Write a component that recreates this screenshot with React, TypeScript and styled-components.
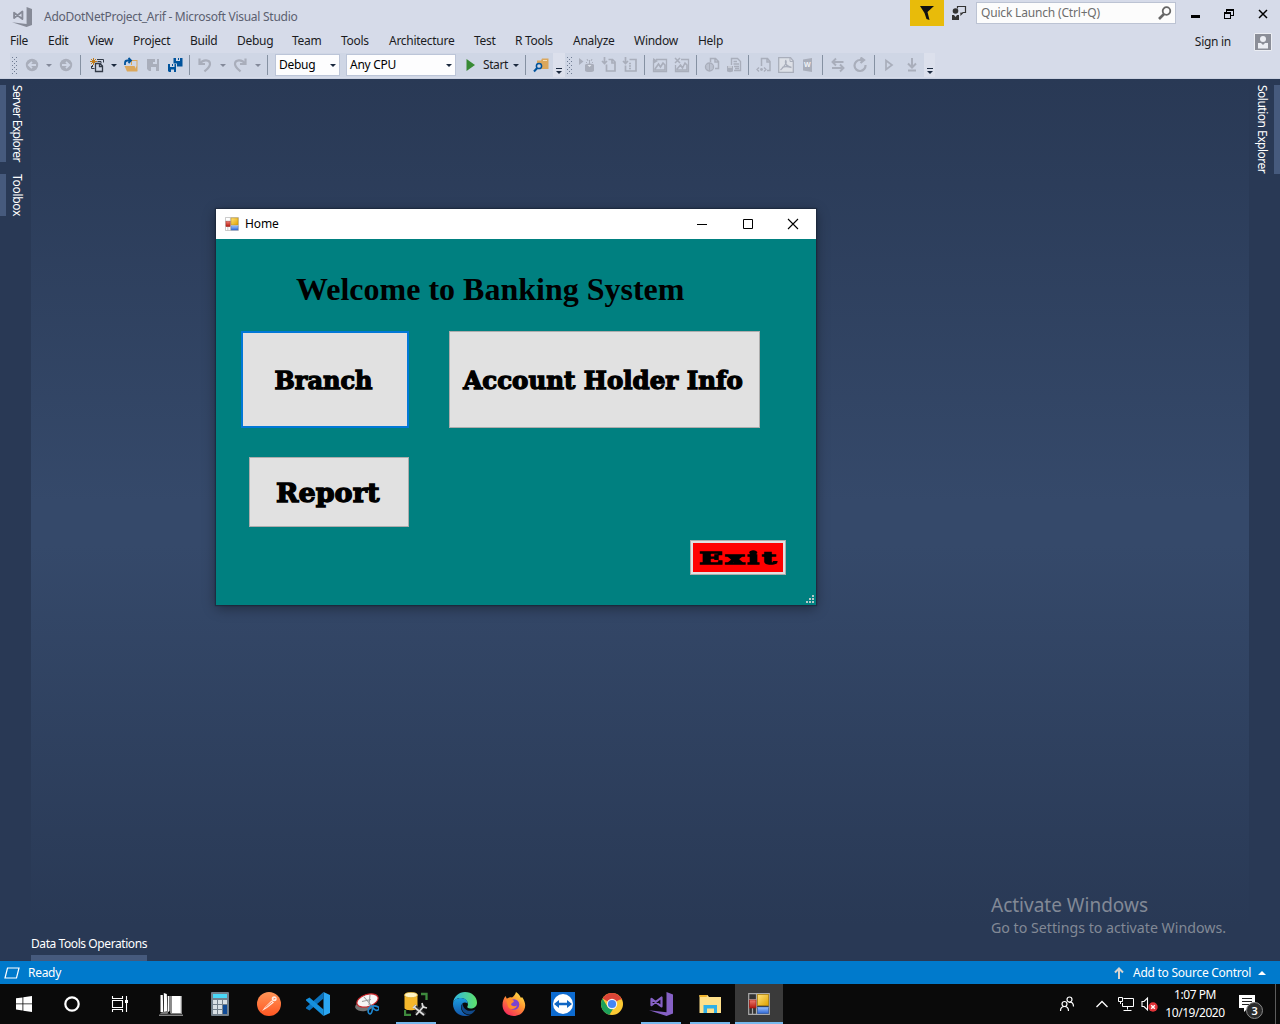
import React from 'react';
import styled, { createGlobalStyle, css } from 'styled-components';

const GlobalStyle = createGlobalStyle`
  * { box-sizing: border-box; }
  html, body { margin: 0; padding: 0; }
  body {
    width: 1280px;
    height: 1024px;
    overflow: hidden;
    font-family: "Noto Sans", "Open Sans", sans-serif;
    font-size: 12px;
    letter-spacing: -0.28px;
    line-height: 16px;
    color: #1b1b1f;
  }
  svg { display: block; flex: none; }
`;

const Desktop = styled.div`
  width: 1280px;
  height: 1024px;
  display: flex;
  flex-direction: column;
  position: relative;
  background: #293955;
`;

const Header = styled.header`
  height: 79px;
  flex: none;
  background: #d6dbe9;
  border-bottom: 1px solid #c9d0e0;
`;

const TitleRow = styled.div`
  height: 30px;
  display: flex;
  align-items: flex-start;
  padding-left: 12px;
`;

const LogoBox = styled.div`
  padding-top: 7px;
  width: 32px;
`;

const AppTitle = styled.div`
  padding-top: 9px;
  width: 866px;
  color: #5b6070;
  white-space: nowrap;
  letter-spacing: -0.27px;
`;

const Flag = styled.div`
  width: 34px;
  height: 26px;
  background: #e8bb0a;
  display: flex;
  align-items: center;
  justify-content: center;
`;

const FeedbackBox = styled.div`
  width: 32px;
  padding: 5px 0 0 7px;
`;

const Search = styled.div`
  width: 200px;
  height: 22px;
  margin-top: 2px;
  border: 1px solid #bcc3d3;
  background: #fcfcfc;
  color: #6d6d6d;
  display: flex;
  align-items: center;
  justify-content: space-between;
  padding: 0 3px 0 4px;
  white-space: nowrap;
  letter-spacing: -0.18px;
`;

const WindowControls = styled.div`
  flex: 1;
  display: flex;
  padding: 8px 11px 0 14px;
  justify-content: space-between;
`;

const MenuRow = styled.nav`
  height: 23px;
  display: flex;
  align-items: center;
  padding: 0 0 2px 10px;
`;

const MenuItem = styled.div<{ $w: number }>`
  width: ${p => p.$w}px;
  white-space: nowrap;
`;

const SignIn = styled.div`
  margin-left: auto;
  padding: 2px 8px 0 0;
  display: flex;
  align-items: center;
  gap: 23px;
  white-space: nowrap;
`;

const ToolRow = styled.div`
  display: flex;
  height: 24px;
  padding-left: 10px;
`;

const Toolbar = styled.div`
  height: 24px;
  display: flex;
  align-items: center;
  background: #cfd6e5;
`;

const Slot = styled.div<{ $ml?: number }>`
  margin-left: ${p => p.$ml ?? 6}px;
  flex: none;
`;

const Sep = styled.div<{ $ml?: number }>`
  margin-left: ${p => p.$ml ?? 6}px;
  width: 1px;
  height: 20px;
  background: #8591a2;
`;

const Grip = styled.div`
  width: 8px;
  height: 17px;
  background-image: radial-gradient(circle at 0.5px 0.5px, #6f7c93 0.5px, transparent 0.7px),
    radial-gradient(circle at 2.5px 2.5px, #6f7c93 0.5px, transparent 0.7px);
  background-size: 4px 4px;
  background-position: 2px 0;
  background-clip: content-box;
  padding: 0 1px 0 2px;
`;

const Caret = styled.div<{ $ml?: number; $dim?: boolean; $up?: boolean }>`
  margin-left: ${p => p.$ml ?? 0}px;
  width: 7px;
  flex: none;
  display: flex;
  justify-content: center;
  &::before {
    content: "";
    border: 3px solid transparent;
    ${p => (p.$up
      ? css`border-top-width: 0; border-bottom: 4px solid #fff; border-left-width: 4px; border-right-width: 4px;`
      : css`border-bottom-width: 0; border-top: 3px solid ${p.$dim ? '#83899a' : '#1b293e'};`)}
  }
`;

const Combo = styled.div<{ $w: number; $ml: number }>`
  margin-left: ${p => p.$ml}px;
  width: ${p => p.$w}px;
  height: 22px;
  border: 1px solid #bcc5d8;
  background: #fdfdfe;
  color: #000;
  display: flex;
  align-items: center;
  justify-content: space-between;
  padding: 0 3px;
  white-space: nowrap;
`;

const StartLabel = styled.div`
  width: 26px;
  margin-left: 5px;
  white-space: nowrap;
  letter-spacing: -0.4px;
`;

const Overflow = styled.div<{ $w: number }>`
  width: ${p => p.$w}px;
  height: 24px;
  background: #dce0ec;
  display: flex;
  flex-direction: column;
  align-items: center;
  justify-content: flex-end;
  gap: 2px;
  padding-bottom: 3px;
  &::before { content: ""; width: 6px; height: 1px; background: #1b293e; }
  &::after { content: ""; border: 3px solid transparent; border-bottom: 0; border-top-color: #1b293e; }
`;

const Workspace = styled.main`
  height: 846px;
  display: flex;
`;

const Rail = styled.aside<{ $right?: boolean }>`
  width: 31px;
  padding-top: 6px;
  display: flex;
  flex-direction: column;
  gap: 12px;
  align-items: ${p => (p.$right ? 'flex-end' : 'flex-start')};
`;

const RailTab = styled.div<{ $h: number; $right?: boolean; $track: number }>`
  height: ${p => p.$h}px;
  width: 28px;
  writing-mode: vertical-rl;
  line-height: 22px;
  color: #fff;
  letter-spacing: ${p => p.$track}px;
  white-space: nowrap;
  ${p => (p.$right
    ? css`border-right: 6px solid #465a7d; padding-right: 1px;`
    : css`border-left: 6px solid #465a7d;`)}
`;

const Canvas = styled.section`
  flex: 1;
  background: linear-gradient(#293955 0%, #35496a 50%, #35496a 55%, #293955 100%);
`;

const BottomDock = styled.div`
  height: 36px;
  padding-left: 31px;
  display: flex;
`;

const DockTab = styled.div`
  width: 116px;
  padding-top: 11px;
  color: #fff;
  white-space: nowrap;
  border-bottom: 6px solid #465a7d;
  letter-spacing: -0.42px;
`;

const StatusBar = styled.footer`
  height: 23px;
  flex: none;
  background: #007acc;
  color: #fff;
  display: flex;
  align-items: center;
  padding: 1px 15px 0 4px;
  white-space: nowrap;
`;

const StatusText = styled.div`
  margin-left: 8px;
`;

const SourceControl = styled.div`
  margin-left: auto;
  display: flex;
  align-items: center;
  gap: 9px;
`;

const SourceLabel = styled.span`
  width: 120px;
  letter-spacing: -0.26px;
`;

const Dialog = styled.div`
  position: absolute;
  left: 216px;
  top: 209px;
  width: 600px;
  height: 396px;
  background: #008080;
  box-shadow: 0 0 1px 1px rgba(20, 30, 45, 0.5), 0 3px 12px rgba(0, 0, 0, 0.4);
  display: flex;
  flex-direction: column;
`;

const DialogTitle = styled.div`
  height: 30px;
  background: #fff;
  color: #000;
  display: flex;
  align-items: center;
  padding: 0 17px 1px 9px;
  gap: 6px;
  letter-spacing: -0.1px;
`;

const DialogControls = styled.div`
  margin-left: auto;
  display: flex;
  gap: 33.500px;
`;

const Welcome = styled.h1`
  margin: 32px 0 24px 80px;
  height: 36px;
  font: bold 32px/36px "Liberation Serif", "Times New Roman", serif;
  letter-spacing: 0;
  color: #000;
  white-space: nowrap;
`;

const ButtonRow = styled.div<{ $left: number; $bottom: number }>`
  display: flex;
  gap: 40px;
  padding-left: ${p => p.$left}px;
  margin-bottom: ${p => p.$bottom}px;
`;

const FormButton = styled.button<{ $w: number; $h: number; $focus?: boolean; $size: number }>`
  width: ${p => p.$w}px;
  height: ${p => p.$h}px;
  padding: 2px 3px 0 0;
  border: ${p => (p.$focus ? '2px solid #0078d7' : '1px solid #adadad')};
  background: #e1e1e1;
  color: #000;
  font: 900 ${p => p.$size}px/1 "DejaVu Serif", "Cooper Black", serif;
  letter-spacing: 0;
  white-space: nowrap;
  display: flex;
  align-items: center;
  justify-content: center;
`;

const Face = styled.span<{ $sx: number; $track?: number }>`
  transform: scaleX(${p => p.$sx});
  letter-spacing: ${p => p.$track ?? 0}px;
  margin-right: ${p => -(p.$track ?? 0)}px;
  -webkit-text-stroke: 1.3px #000;
`;

const ExitButton = styled.button`
  align-self: flex-end;
  margin-right: 30px;
  width: 96px;
  height: 35px;
  padding: 1px 0 0;
  border: 1px solid #adadad;
  box-shadow: inset 0 0 0 2px #e1e1e1;
  background: #f00;
  color: #000;
  font: 900 17px/1 "DejaVu Serif", serif;
  display: flex;
  align-items: center;
  justify-content: center;
`;

const SizeGrip = styled.div`
  margin: auto 1px 1px auto;
`;

const Watermark = styled.div`
  position: absolute;
  left: 991px;
  top: 892px;
  color: #828996;
  white-space: nowrap;
  letter-spacing: 0;
`;

const WatermarkTitle = styled.div`
  font-size: 19px;
  line-height: 26px;
`;

const WatermarkText = styled.div`
  font-size: 14.2px;
  line-height: 20px;
`;

const Taskbar = styled.div`
  height: 40px;
  flex: none;
  background: #0a0a0a;
  display: flex;
  color: #fff;
`;

const SystemButton = styled.div`
  width: 48px;
  display: flex;
  align-items: center;
  justify-content: center;
`;

const Apps = styled.div`
  display: flex;
  gap: 1px;
  padding-left: 3px;
`;

const AppButton = styled.div<{ $state?: 'open' | 'active' }>`
  width: 48px;
  height: 40px;
  display: flex;
  align-items: center;
  justify-content: center;
  background: ${p => (p.$state === 'active' ? '#3a3a3a' : 'transparent')};
  ${p => p.$state && css`
    background-image: linear-gradient(#76b9ed, #76b9ed);
    background-repeat: no-repeat;
    background-size: ${p.$state === 'active' ? 48 : 40}px 2px;
    background-position: center bottom;
  `}
`;

const Tray = styled.div`
  margin-left: auto;
  display: flex;
  align-items: center;
`;

const TrayIcon = styled.div<{ $w: number }>`
  width: ${p => p.$w}px;
`;

const Clock = styled.div`
  width: 66px;
  text-align: center;
  line-height: 18px;
  padding-bottom: 1px;
  white-space: nowrap;
  letter-spacing: -0.45px;
`;

const Notifications = styled.div`
  position: relative;
  width: 26px;
  height: 18px;
  margin-left: 11px;
`;

const NoticeCount = styled.div`
  position: absolute;
  left: 7px;
  top: 7px;
  width: 17px;
  height: 17px;
  border-radius: 50%;
  border: 1px solid #8a8a8a;
  background: #2b2b2b;
  text-align: center;
  font-size: 11px;
  line-height: 15px;
  font-weight: 600;
`;

const ShowDesktop = styled.div`
  width: 5px;
  height: 40px;
  border-left: 1px solid #5c5c5c;
  margin-left: 10px;
`;

const G = '#a9aebb';

const Tool = ({ children }: { children: React.ReactNode }) => (
  <svg width="16" height="16" viewBox="0 0 16 16" fill="none">{children}</svg>
);

const SaveIcon = () => (
  <Tool>
    <path fill={G} fillRule="evenodd" d="M2 2h12v12H4l-2-2zM5 2v5h7V2h-2v3H8V2zM6 10v4h5v-4z" />
    <path fill={G} d="M2 7h12v3H2zM5 2h3v5H5z" />
  </Tool>
);

const BackIcon = ({ flip }: { flip?: boolean }) => (
  <Tool>
    <g transform={flip ? 'matrix(-1 0 0 1 16 0)' : undefined}>
      <circle cx="8" cy="8" r="6.200" fill={G} />
      <path d="M12 8H5M8 4.8 4.8 8 8 11.2" stroke="#cfd6e5" strokeWidth="1.800" />
    </g>
  </Tool>
);

const NewProjectIcon = () => (
  <Tool>
    <path d="M4.500 1v7M1 4.500h7M2 2l5 5M7 2 2 7" stroke="#c27d1a" strokeWidth="1" />
    <path d="M8 2.500h6.500v3M2.500 9v2.500h3" stroke="#333b48" />
    <path d="M6.500 6.500h4.500l2.500 2.500v5.500h-7zM10.500 6.500v3h3" stroke="#333b48" strokeWidth="1.300" />
    <path d="M3.500 8v2M8.500 4.500H12v2" stroke="#333b48" />
  </Tool>
);

const OpenIcon = () => (
  <Tool>
    <path d="M8 3h6.500v11H13V8H8z" fill="#dba75c" />
    <path d="M1.500 9H11.500l3 5.500H4z" fill="#dba75c" />
    <path d="M9 4h4.500v6l-1-2H9z" fill="#cfd6e5" />
    <path d="M2 8V6a2.500 2.500 0 0 1 2.500-2.500H7.500M5.500 1 8 3.500 5.500 6" stroke="#00539c" strokeWidth="1.800" />
  </Tool>
);

const SaveAllIcon = () => (
  <Tool>
    <path fill="#00539c" fillRule="evenodd" d="M6.500 1h9v8.500H10V6.500H6.500zM9 1v3h4V1h-1v2h-1V1z" />
    <path fill="#00539c" fillRule="evenodd" d="M1 7h8v8H2l-1-1zM3 7v3h4.500V7H6v2H5V7zM4 12.500V15h3v-2.500z" />
  </Tool>
);

const UndoIcon = ({ flip }: { flip?: boolean }) => (
  <Tool>
    <g transform={flip ? 'matrix(-1 0 0 1 16 0)' : undefined} stroke={G} strokeWidth="2.200">
      <path d="M3 6.500C6 2 13 2.500 13 7c0 3-3 5-5.500 7.500" />
      <path d="M2.500 1.500v5.500H8" />
    </g>
  </Tool>
);

const FindFolderIcon = () => (
  <Tool>
    <path d="M4 3.500h4L9 1.500h6.500V12H4z" fill="#dba75c" />
    <path d="M10 3.500h4" stroke="#f4dfb8" />
    <circle cx="6" cy="9" r="2.600" fill="#cfd6e5" stroke="#00539c" strokeWidth="1.500" />
    <path d="M4.200 11 1 14.500" stroke="#00539c" strokeWidth="2" />
  </Tool>
);

const dimIcons: Record<string, React.ReactNode> = {
  dbRun: (<><path d="M0 1l4.500 3.500L0 8zM6 8h9v5.500c0 2-9 2-9 0z" fill={G} /><ellipse cx="10.500" cy="8" rx="4.500" ry="1.600" fill={G} /><path d="M10.500 3v6M8 2l1 2M13 2l-1 2M7 5l1 1M14 5l-1 1" stroke={G} /><path d="M8.500 8h4l-2 2z" fill="#e2e6ee" /></>),
  pageIn: (<><path d="M5.500 7.500V14h8.500V5L11.500 2.500H7.500M11 2.500V6h3.500" stroke={G} strokeWidth="1.700" /><path d="M3.500 0v6M1 4l2.500 2.500L6 4" stroke={G} strokeWidth="1.700" /></>),
  tableIn: (<><path d="M3.500 8.500V14h10.500V2.500H7.500M7 6.500h2M7 9h2M7 11.500h2" stroke={G} strokeWidth="1.700" /><path d="M3.500 0v6M1 4l2.500 2.500L6 4" stroke={G} strokeWidth="1.700" /></>),
  chart: (<><path d="M1.500 3v11.500h13V2.500H4" stroke={G} strokeWidth="1.300" /><path d="M1 1l5 3-5 3z" fill={G} /><path d="m3 12 3.500-5 2 3 2.500-4 2 2v5H3z" stroke={G} strokeWidth="1.600" /></>),
  chartX: (<><path d="M1.500 8v6.500h13V2.500H7" stroke={G} strokeWidth="1.300" /><path d="m1 1 5 5M6 1 1 6" stroke={G} strokeWidth="1.500" /><path d="m3 12 3.500-4 2 3L11 6l2 2v5H3z" stroke={G} strokeWidth="1.600" /></>),
  web: (<><path d="M6.500 5V1.500h5l3 3v7H11M11 1.500V5h3.500" stroke={G} strokeWidth="1.500" /><circle cx="5.500" cy="10" r="4" stroke={G} strokeWidth="1.400" /><path d="M1.500 10h8M5.500 6v8M2.500 8h6M2.500 12h6" stroke={G} /></>),
  dbDoc: (<><path d="M5.500 8V1.500h6l3 3v9H8M7.500 4.500H11M7.500 7H13M8 9.500h5M9 11.500h4" stroke={G} strokeWidth="1.400" /><path d="M1 9h6v5c0 1.500-6 1.500-6 0z" fill={G} /><path d="M2 10h4" stroke="#e2e6ee" /></>),
  xml: (<><path d="M5.500 9V1.500h6l2.500 3v9h-3M11 1.500V5h3" stroke={G} strokeWidth="1.500" /><path d="M3 10.500 1 12.500l2 2M8 10.500l2 2-2 2" stroke={G} strokeWidth="1.300" /><circle cx="5.500" cy="12.500" r="1.400" fill={G} /></>),
  pdf: (<><path d="M.7.700h11.800L15.300 4v11.300H.7z" fill="#dde0e7" stroke={G} strokeWidth="1.300" /><path d="M12 1v3.500h3" stroke={G} /><path d="M7.500 3c1.500 2-.5 6-5 10M7.500 4c-.5 3 2 5.500 6 6.500M4 10.500c3-1.500 5-1.500 9 0" stroke={G} strokeWidth="1.300" /></>),
  word: (<path d="M3 2.500 12 1v14l-9-1.500z" fill={G} />),
  swap: (<path d="M13.500 5H3M6 1.500 2.500 5 6 8.500M2 11h11M10 7.500l3.500 3.500-3.500 3.500" stroke={G} strokeWidth="1.900" />),
  refresh: (<path d="M13.500 8A5.500 5.500 0 1 1 8 3h3M8.500.500 12 3 8.500 6" stroke={G} strokeWidth="2.200" />),
  play: (<path d="M5 3.500v9L11 8z" stroke={G} strokeWidth="1.700" />),
  down: (<path d="M8 1v9M4 6.500 8 10.500l4-4M4 13.500h8" stroke={G} strokeWidth="2" />),
};

const WordMark = styled.span`
  position: absolute;
  left: 4px;
  top: 0;
  font: bold 7px/16px "Liberation Sans", sans-serif;
  letter-spacing: 0;
  color: #f2f4f8;
`;

const WordSlot = styled(Slot)`
  position: relative;
`;

const VsLogo = ({ color, size }: { color: string; size: number }) => (
  <svg width={size} height={size} viewBox="0 0 24 24" fill="none">
    <path d="M17.500 0 24 2.500v19L17.500 24 0 18.300l17.500 2z" fill={color} />
    <path d="M2.500 6.800v6.400L12.500 5.500v9z" stroke={color} strokeWidth="2.200" strokeLinejoin="round" />
  </svg>
);

const FormsIcon = ({ size, dark }: { size: number; dark?: boolean }) => (
  <svg width={size} height={size} viewBox="0 0 22 22">
    <defs>
      <linearGradient id="fy" x2="1" y2="1"><stop stopColor="#ffe27a" /><stop offset="1" stopColor="#e0a200" /></linearGradient>
      <linearGradient id="fr" x2="0" y2="1"><stop stopColor="#ee7c70" /><stop offset="1" stopColor="#b3190f" /></linearGradient>
      <linearGradient id="fb" x2="0" y2="1"><stop stopColor="#9cc3ff" /><stop offset="1" stopColor="#2e66d4" /></linearGradient>
    </defs>
    <path d="M.7.700h20.600v20.600H.7zM8.500 1v20M1 6.500h8M1 14.500h20M4.500 15v6" fill={dark ? '#333' : '#fff'} stroke={dark ? '#aaa' : '#b8b8b8'} strokeWidth="1.200" />
    <rect x="9.500" y="1.500" width="11" height="11" fill="url(#fy)" stroke="#b98c14" strokeWidth=".8" />
    <rect x="1.500" y="7" width="6.500" height="8" fill="url(#fr)" stroke="#a1150d" strokeWidth=".6" />
    <rect x="9.500" y="14" width="11" height="6.500" fill="url(#fb)" stroke="#3c68b4" strokeWidth=".6" />
  </svg>
);

const Icon24 = ({ children }: { children: React.ReactNode }) => (
  <svg width="24" height="24" viewBox="0 0 24 24" fill="none">{children}</svg>
);

const LibraryIcon = () => (
  <Icon24>
    <path d="M1.500 3h2.300l.5 17H1.500zM4.800 1l3 1 .7 19H5zM8.700 4h1.800v15l-1.500 1z" fill="#fff" />
    <path d="M11.500 4H23v17.500H11.500z" fill="#fff" />
    <path d="M11.500 4H13v17h-1.500zM21.700 4H23v17.500h-1.300z" fill="#8d8d8d" />
    <path d="M2 20.500l6-1.500v2l2 1H1z" fill="#777" />
    <path d="M0 23.200h24" stroke="#bbb" strokeWidth="1" />
  </Icon24>
);

const CalculatorIcon = () => (
  <Icon24>
    <rect x="3" y="0" width="18" height="24" rx="1" fill="#73808c" />
    <rect x="5" y="2" width="14" height="4" fill="#4ad8f8" />
    {[0, 1, 2].map(r => [0, 1, 2].map(c => (
      (c < 2 || r < 1) && <rect key={`${r}${c}`} x={5 + c * 5} y={8 + r * 5} width="4" height="4" fill="#d9e0e5" />
    )))}
    <rect x="15" y="13" width="4" height="9" fill="#0f4a96" />
  </Icon24>
);

const PostmanIcon = () => (
  <Icon24>
    <defs><linearGradient id="pm" x2="0" y2="1"><stop stopColor="#ff9557" /><stop offset="1" stopColor="#ff5622" /></linearGradient></defs>
    <circle cx="12" cy="12" r="12" fill="url(#pm)" />
    <path d="M5 19l3-4 6.500-6.500 2.500 2L10 16z" fill="#ffe9df" />
    <path d="M8.500 15.500l6.500-5.500" stroke="#ff6c37" strokeWidth=".8" />
    <circle cx="17.200" cy="6.800" r="2.500" fill="#ffe9df" />
    <path d="M16.500 7l1.800-.5" stroke="#ff6c37" />
  </Icon24>
);

const VsCodeIcon = () => (
  <Icon24>
    <path d="M17.500 0 24 3v18l-6.500 3z" fill="#2aa7f4" />
    <path d="M17.500 6.500 3.500 18.500 0 16.500v-1L17.500 0z" fill="#0a72bd" />
    <path d="M17.500 17.500 3.500 5.500 0 7.500v1L17.500 24z" fill="#1590dd" />
  </Icon24>
);

const SnippingIcon = () => (
  <Icon24>
    <ellipse cx="9.500" cy="14" rx="9.500" ry="5" fill="#747474" transform="rotate(-8 9.500 14)" />
    <ellipse cx="12.500" cy="8.500" rx="11" ry="6" fill="#f6f6f6" stroke="#c82428" strokeWidth="1.200" transform="rotate(-18 12.500 8.500)" />
    <path d="m9 5 7 8M15 3l-1 10M7 9.500l9-2" stroke="#9a9a9a" strokeWidth="1.100" />
    <path d="M17 13.500c-3 1-5 6-3 8s4-3 3.500-7c1 3 4 5 6 3s-2-4-6-3.500" stroke="#1d86cf" strokeWidth="1.700" />
  </Icon24>
);

const SqlToolsIcon = () => (
  <Icon24>
    <path d="M.5 3v13c0 3 13 3 13 0V3z" fill="#f4b72c" />
    <ellipse cx="7" cy="3" rx="6.500" ry="2.700" fill="#fff4c5" stroke="#dba720" strokeWidth=".7" />
    <path d="M17 2h5.500v6M1 18v5h6" stroke="#3e8a3d" strokeWidth="2.300" />
    <path d="m10 14 11 9M12 22l8-9" stroke="#333" strokeWidth="4" />
    <path d="m10 15 10 8M12 23l8-9M9 16l3-3M18 11l1 4 4 1" stroke="#dcdcdc" strokeWidth="1.700" />
  </Icon24>
);

const EdgeIcon = () => (
  <Icon24>
    <defs>
      <linearGradient id="ea" x2="1"><stop stopColor="#2fb5e4" /><stop offset="1" stopColor="#5fe26a" /></linearGradient>
      <linearGradient id="eb" x2="0" y2="1"><stop stopColor="#1b9de0" /><stop offset="1" stopColor="#1254a8" /></linearGradient>
    </defs>
    <path d="M0 11C1 4 6 0 12 0c7 0 12 5 12 10.500 0 4-3 6-6.500 6-2.500 0-4-1-3-2.200C16 12 14 6 8 6 4 6 1 8 0 11z" fill="url(#ea)" />
    <path d="M0 12c0-4 4-6 8-6 4.500 0 7 3 6.500 5.500C12 9 8 11 8 15c0 5 4 8.500 9 8-2 .8-3.500 1-5 1C5 24 0 18.500 0 12z" fill="url(#eb)" />
    <path d="M9.500 11.500C6.500 15 10 23 17 22.500c2.500-.8 4.500-2.800 5.500-5-6 3-12 1-13-6z" fill="#114a8b" />
  </Icon24>
);

const FirefoxIcon = () => (
  <Icon24>
    <defs><linearGradient id="ff" x1=".9" x2=".2" y2="1"><stop stopColor="#fff04d" /><stop offset=".45" stopColor="#ff9330" /><stop offset="1" stopColor="#f4225f" /></linearGradient></defs>
    <path d="M14 0c3 2 4 4 5 6l1-1c3 4 4 8 2.500 12-2 5-6.500 7-11 7C5 24 .5 19 .5 13c0-4 1-6 3-9l1.500 3C7 5 8 5 10 5.500 12 4 13 3 14 0z" fill="url(#ff)" />
    <circle cx="12" cy="12.500" r="5.300" fill="#7b42d1" />
    <path d="M4 7c4-1 6 0 8 2 0 1.500-3 2-3 3.500 1 2 4 2 6 1-1 4-7 5-9 1z" fill="#ff8a2a" />
  </Icon24>
);

const TeamViewerIcon = () => (
  <Icon24>
    <rect width="24" height="24" fill="#0d6bd0" />
    <circle cx="12" cy="12" r="10" fill="#fff" />
    <path d="M3 12l5-4v2.700h8V8l5 4-5 4v-2.700H8V16z" fill="#0f66c4" />
  </Icon24>
);

const ChromeIcon = () => (
  <Icon24>
    <circle cx="12" cy="12" r="11" fill="#fbc933" />
    <path d="M12 12 2.500 6.500a11 11 0 0 1 19 0z" fill="#db4437" />
    <path d="M2.500 6.500 8 15.500l5 1.500-3.500 5.800A11 11 0 0 1 2.500 6.500z" fill="#1da05a" />
    <path d="M12 7h9.800" stroke="#db4437" />
    <circle cx="12" cy="12" r="5.200" fill="#f3f3f3" />
    <circle cx="12" cy="12" r="4.100" fill="#4485f4" />
  </Icon24>
);

const ExplorerIcon = () => (
  <Icon24>
    <path d="M1.500 3h8l1.500 2H23v16H1.500z" fill="#ffe08a" />
    <path d="M1.500 3h8l-1 2h-7z" fill="#f0b42e" />
    <path d="M5.500 21v-8h13.500v8H16v-4.500H9V21z" fill="#30b0e8" />
  </Icon24>
);

const menu: [string, number][] = [
  ['File', 38], ['Edit', 40], ['View', 45], ['Project', 57], ['Build', 47], ['Debug', 55], ['Team', 49],
  ['Tools', 48], ['Architecture', 85], ['Test', 41], ['R Tools', 58], ['Analyze', 61], ['Window', 64], ['Help', 40],
];

const dataTools: (string | [string, number])[] = [
  ['dbRun', 5], 'pageIn', ['tableIn', 5], '|', ['chart', 7], 'chartX', '|', ['web', 7], 'dbDoc', '|',
  ['xml', 7], 'pdf', 'word', '|', ['swap', 7], 'refresh', '|', ['play', 6], ['down', 7],
];

const apps: { icon: React.ReactNode; state?: 'open' | 'active' }[] = [
  { icon: <LibraryIcon /> },
  { icon: <CalculatorIcon /> },
  { icon: <PostmanIcon /> },
  { icon: <VsCodeIcon /> },
  { icon: <SnippingIcon /> },
  { icon: <SqlToolsIcon />, state: 'open' },
  { icon: <EdgeIcon /> },
  { icon: <FirefoxIcon /> },
  { icon: <TeamViewerIcon /> },
  { icon: <ChromeIcon /> },
  { icon: <VsLogo color="#8661c5" size={24} />, state: 'open' },
  { icon: <ExplorerIcon />, state: 'open' },
  { icon: <FormsIcon size={22} dark />, state: 'active' },
];

const StudioHeader = () => (
  <Header>
    <TitleRow>
      <LogoBox><VsLogo color="#868a97" size={20} /></LogoBox>
      <AppTitle>AdoDotNetProject_Arif - Microsoft Visual Studio</AppTitle>
      <Flag>
        <svg width="14" height="14" viewBox="0 0 14 14"><path d="M0 0h14L7.500 6 9.500 14 6.500 13 4.500 7z" fill="#111" /></svg>
      </Flag>
      <FeedbackBox>
        <svg width="16" height="16" viewBox="0 0 16 16" fill="none">
          <path d="M6.500 3.500v-2h8v6H12l-2 2V7.500" stroke="#333" strokeWidth="1.200" />
          <circle cx="4.500" cy="6" r="2.800" fill="#333" />
          <path d="M1 10h2l1.500 2L6 10h2v5H1z" fill="#333" />
        </svg>
      </FeedbackBox>
      <Search>
        Quick Launch (Ctrl+Q)
        <svg width="14" height="14" viewBox="0 0 14 14" fill="none">
          <circle cx="8.500" cy="5" r="3.800" stroke="#666" strokeWidth="1.800" />
          <path d="M6 8 1 13" stroke="#666" strokeWidth="2.600" />
        </svg>
      </Search>
      <WindowControls>
        <svg width="11" height="12" viewBox="0 0 11 12"><path d="M1 7h9v3H1z" fill="#000" /></svg>
        <svg width="12" height="12" viewBox="0 0 12 12" fill="none" shapeRendering="crispEdges">
          <path d="M3.500 4V1.500h7v6H8M3 2h8" stroke="#000" /><path d="M1.500 4.500h6v6h-6zM1 5h7" stroke="#000" />
        </svg>
        <svg width="12" height="12" viewBox="0 0 12 12"><path d="m2 2 8 8M10 2l-8 8" stroke="#000" strokeWidth="1.500" /></svg>
      </WindowControls>
    </TitleRow>
    <MenuRow>
      {menu.map(([label, w]) => <MenuItem key={label} $w={w}>{label}</MenuItem>)}
      <SignIn>
        Sign in
        <svg width="18" height="18" viewBox="0 0 18 18">
          <path d="M.5.500h17v17H.5z" fill="#8b8e98" stroke="#eceef4" />
          <circle cx="9" cy="6" r="3" fill="#eceef4" />
          <path d="M4 10h3l2 2 2-2h3v5.500H4z" fill="#eceef4" />
        </svg>
      </SignIn>
    </MenuRow>
    <ToolRow>
      <Toolbar>
        <Grip />
        <Slot><BackIcon /></Slot>
        <Caret $ml={5} $dim />
        <Slot $ml={6}><BackIcon flip /></Slot>
        <Sep />
        <Slot $ml={8}><NewProjectIcon /></Slot>
        <Caret $ml={5} />
        <Slot $ml={6}><OpenIcon /></Slot>
        <Slot><SaveIcon /></Slot>
        <Slot><SaveAllIcon /></Slot>
        <Sep />
        <Slot $ml={7}><UndoIcon /></Slot>
        <Caret $ml={6} $dim />
        <Slot $ml={6}><UndoIcon flip /></Slot>
        <Caret $ml={6} $dim />
        <Sep />
        <Combo $ml={7} $w={65}>Debug<Caret /></Combo>
        <Combo $ml={6} $w={110}>Any CPU<Caret /></Combo>
        <Slot><Tool><path d="M4.500 2v12L13 8z" fill="#388a34" /></Tool></Slot>
        <StartLabel>Start</StartLabel>
        <Caret $ml={3} />
        <Sep />
        <Slot $ml={7}><FindFolderIcon /></Slot>
        <Slot $ml={4} />
      </Toolbar>
      <Overflow $w={12} />
      <Toolbar>
        <Grip /><Slot $ml={1} />
        {dataTools.map((t, i) => {
          if (t === '|') return <Sep key={i} />;
          const [name, ml] = typeof t === 'string' ? [t, 6] : t;
          return name === 'word'
            ? <WordSlot key={i} $ml={ml}><Tool>{dimIcons.word}</Tool><WordMark>W</WordMark></WordSlot>
            : <Slot key={i} $ml={ml}><Tool>{dimIcons[name]}</Tool></Slot>;
        })}
        <Slot $ml={4} />
      </Toolbar>
      <Overflow $w={11} />
    </ToolRow>
  </Header>
);

const HomeDialog = () => (
  <Dialog>
    <DialogTitle>
      <FormsIcon size={14} />
      Home
      <DialogControls>
        <svg width="12" height="12" viewBox="0 0 12 12"><path d="M1 6.500h10" stroke="#000" /></svg>
        <svg width="12" height="12" viewBox="0 0 12 12"><path d="M1.500 1.500h9v9h-9z" fill="none" stroke="#000" /></svg>
        <svg width="12" height="12" viewBox="0 0 12 12"><path d="m1 1 10 10M11 1 1 11" stroke="#000" strokeWidth="1.100" /></svg>
      </DialogControls>
    </DialogTitle>
    <Welcome>Welcome to Banking System</Welcome>
    <ButtonRow $left={25} $bottom={29}>
      <FormButton $w={168} $h={97} $size={24} $focus><Face $sx={1}>Branch</Face></FormButton>
      <FormButton $w={311} $h={97} $size={24}><Face $sx={1.02}>Account Holder Info</Face></FormButton>
    </ButtonRow>
    <ButtonRow $left={33} $bottom={13}>
      <FormButton $w={160} $h={70} $size={26}><Face $sx={1.04}>Report</Face></FormButton>
    </ButtonRow>
    <ExitButton><Face $sx={1.8} $track={1.8}>Exit</Face></ExitButton>
    <SizeGrip>
      <svg width="9" height="9" viewBox="0 0 9 9">
        <path d="M6 0h2v2H6zM3 3h2v2H3zM6 3h2v2H6zM0 6h2v2H0zM3 6h2v2H3zM6 6h2v2H6z" fill="#b9c9c9" />
      </svg>
    </SizeGrip>
  </Dialog>
);

const WindowsTaskbar = () => (
  <Taskbar>
    <SystemButton>
      <svg width="16" height="16" viewBox="0 0 16 16"><path d="M0 2.300 6.500 1.400v6.100H0zM7.300 1.300 16 0v7.500H7.300zM0 8.300h6.500v6.200L0 13.600zM7.300 8.300H16V16l-8.700-1.300z" fill="#fff" /></svg>
    </SystemButton>
    <SystemButton>
      <svg width="18" height="18" viewBox="0 0 18 18"><circle cx="9" cy="9" r="6.700" fill="none" stroke="#fff" strokeWidth="2.200" /></svg>
    </SystemButton>
    <SystemButton>
      <svg width="18" height="18" viewBox="0 0 18 18" fill="none">
        <path d="M1.500 1v2.500h10V1M1.500 17v-2.500h10V17M1.500 5.500h10v7h-10zM15.500 1v16" stroke="#fff" strokeWidth="1.100" /><path d="M14 5h3v3h-3z" fill="#fff" />
      </svg>
    </SystemButton>
    <Apps>{apps.map((a, i) => <AppButton key={i} $state={a.state}>{a.icon}</AppButton>)}</Apps>
    <Tray>
      <TrayIcon $w={36}>
        <svg width="16" height="16" viewBox="0 0 16 16" fill="none" stroke="#fff" strokeWidth="1.200">
          <circle cx="5.500" cy="8" r="2.500" /><path d="M1.500 15c0-6 8-6 8 0" /><circle cx="10.500" cy="3.500" r="2.500" /><path d="M10 6.500c3-1 4.500 1 4.500 4" />
        </svg>
      </TrayIcon>
      <TrayIcon $w={23}>
        <svg width="14" height="14" viewBox="0 0 14 14"><path d="m1.500 10 5.500-5.500 5.500 5.500" fill="none" stroke="#fff" strokeWidth="1.300" /></svg>
      </TrayIcon>
      <TrayIcon $w={23}>
        <svg width="17" height="16" viewBox="0 0 17 16" fill="none" stroke="#fff" strokeWidth="1">
          <path d="M5.500 2.500h10v8h-11V7M.5 1.500h4v4h-4zM2.500 5.500V8M9.500 10.500v3M5.500 14.500h8" />
        </svg>
      </TrayIcon>
      <TrayIcon $w={21}>
        <svg width="18" height="16" viewBox="0 0 18 16" fill="none">
          <path d="M1 5.500h2L6.500 2v12L3 10.500H1z" stroke="#fff" strokeWidth="1.100" />
          <circle cx="12" cy="11" r="4.700" fill="#e23338" />
          <path d="m10.200 9.200 3.600 3.600M13.800 9.200l-3.600 3.600" stroke="#fff" strokeWidth="1.400" />
        </svg>
      </TrayIcon>
      <Clock>1:07 PM<br />10/19/2020</Clock>
      <Notifications>
        <svg width="18" height="18" viewBox="0 0 18 18"><path d="M0 0h16v13H9l-4 4v-4H0z" fill="#fff" /><path d="M3 3.500h10M3 6.500h10M3 9.500h7" stroke="#222" /></svg>
        <NoticeCount>3</NoticeCount>
      </Notifications>
      <ShowDesktop />
    </Tray>
  </Taskbar>
);

export default function App() {
  return (
    <Desktop>
      <GlobalStyle />
      <StudioHeader />
      <Workspace>
        <Rail>
          <RailTab $h={77} $track={-0.65}>Server Explorer</RailTab>
          <RailTab $h={42} $track={-0.3}>Toolbox</RailTab>
        </Rail>
        <Canvas />
        <Rail $right>
          <RailTab $h={89} $right $track={-0.5}>Solution Explorer</RailTab>
        </Rail>
      </Workspace>
      <BottomDock><DockTab>Data Tools Operations</DockTab></BottomDock>
      <StatusBar>
        <svg width="16" height="12" viewBox="0 0 16 12"><path d="M3.500 1h11.500l-2.500 10H1z" fill="none" stroke="#fff" strokeWidth="1.200" /></svg>
        <StatusText>Ready</StatusText>
        <SourceControl>
          <svg width="10" height="12" viewBox="0 0 10 12"><path d="M5 12V2M1 5.500 5 1.500l4 4" fill="none" stroke="#d8d4cf" strokeWidth="2" /></svg>
          <SourceLabel>Add to Source Control</SourceLabel>
          <Caret $up $ml={-4} />
        </SourceControl>
      </StatusBar>
      <WindowsTaskbar />
      <HomeDialog />
      <Watermark>
        <WatermarkTitle>Activate Windows</WatermarkTitle>
        <WatermarkText>Go to Settings to activate Windows.</WatermarkText>
      </Watermark>
    </Desktop>
  );
}
